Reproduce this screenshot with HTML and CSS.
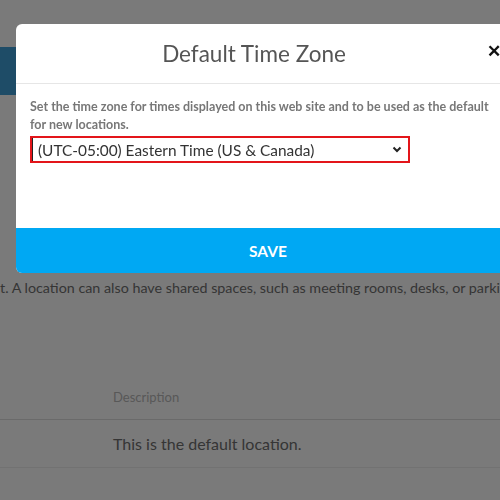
FILE: index.html
```html
<!DOCTYPE html>
<html>
<head>
<meta charset="utf-8">
<link rel="stylesheet" href="styles.css">
</head>
<body>
<div class="page">
  <div class="topbar"></div>
  <div class="subbar"></div>
  <p class="intro">t. A location can also have shared spaces, such as meeting rooms, desks, or parking</p>
  <div class="table">
    <div class="thead"><span class="col">Description</span></div>
    <div class="trow"><span class="col">This is the default location.</span></div>
  </div>
</div>
<div class="overlay"></div>
<div class="modal">
  <div class="modal-header">
    <h2 class="modal-title">Default Time Zone</h2>
    <span class="close">&#x2715;</span>
  </div>
  <div class="modal-body">
    <p class="help">Set the time zone for times displayed on this web site and to be used as the default for new locations.</p>
    <div class="select">
      <span class="select-text">(UTC-05:00) Eastern Time (US &amp; Canada)</span>
      <svg class="chev" width="10" height="7" viewBox="0 0 10 7"><path d="M1.5 1.5 L5 5 L8.5 1.5" fill="none" stroke="#222" stroke-width="2"/></svg>
    </div>
  </div>
  <button class="save">SAVE</button>
</div>
</body>
</html>
```
FILE: styles.css
```css
html, body {
  margin: 0;
  padding: 0;
  width: 500px;
  height: 500px;
  overflow: hidden;
  background: #fff;
  font-family: Lato, "Open Sans", sans-serif;
}
.page {
  padding-top: 47px;
}
.topbar {
  height: 48px;
  background: #3f9fd8;
}
.subbar {
  height: 52px;
}
.intro {
  margin: 131px 0 0 0;
  font-size: 14.3px;
  color: #707070;
  white-space: nowrap;
  line-height: 20px;
}
.table {
  margin-top: 77px;
}
.thead {
  height: 44px;
  border-bottom: 1px solid #dedede;
  display: flex;
  align-items: center;
  padding-left: 113px;
  font-size: 13px;
  color: #b8b8b8;
}
.trow {
  height: 47px;
  border-bottom: 1px solid #efefef;
  display: flex;
  align-items: center;
  padding-left: 113px;
  font-size: 16px;
  color: #707070;
}
.overlay {
  position: fixed;
  inset: 0;
  background: rgba(0, 0, 0, 0.52);
}
.modal {
  position: absolute;
  left: 16px;
  top: 24px;
  width: 504px;
  background: #fff;
  border-radius: 6px;
  overflow: hidden;
  display: flex;
  flex-direction: column;
}
.modal-header {
  height: 59px;
  border-bottom: 1px solid #e6e6e6;
  display: flex;
  align-items: center;
  position: relative;
  padding-right: 28px;
}
.modal-title {
  flex: 1;
  margin: 0;
  text-align: center;
  font-size: 22.5px;
  font-weight: 400;
  color: #555;
}
.close {
  position: absolute;
  left: 471px;
  top: 16px;
  font-size: 17px;
  font-weight: 700;
  color: #111;
}
.modal-body {
  padding: 14px 14px 0 14px;
  height: 130px;
}
.help {
  margin: 0;
  font-size: 12.5px;
  line-height: 18px;
  color: #777;
  font-weight: 700;
}
.select {
  margin-top: 2px;
  width: 364px;
  height: 23px;
  border: 2px solid #e3151a;
  display: flex;
  align-items: center;
  justify-content: space-between;
  padding: 0 6px 0 6px;
  box-shadow: inset 1px 0 0 #222;
}
.select-text {
  font-size: 15.4px;
  color: #333;
}
.chev {
  display: block;
}
.save {
  height: 45px;
  border: 0;
  background: #00a8f3;
  color: #fff;
  font-family: Lato, sans-serif;
  font-weight: 700;
  font-size: 15.5px;
  text-align: center;
  padding: 0;
}
```
